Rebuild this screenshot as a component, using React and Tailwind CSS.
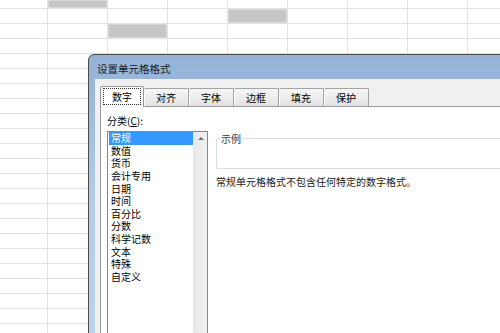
import React from "react";

const COLS = [48, 60, 60, 60, 60, 60, 60, 60, 60];
const ROW_COUNT = 23;

function Sheet() {
  const gray = new Set(["0-1", "1-4", "2-2"]);
  const rows = [];
  for (let r = 0; r < ROW_COUNT; r++) {
    const h = r === 0 ? "h-[9px]" : "h-[15px]";
    rows.push(
      <div key={r} className={`flex ${h}`}>
        {COLS.map((w, c) => {
          const isGray = gray.has(`${r}-${c}`);
          return (
            <div
              key={c}
              className={`shrink-0 h-full border-r border-b border-[#e1e1e1] ${c === 0 ? "w-[48px]" : "w-[60px]"} ${
                isGray ? "bg-[#c6c6c6] shadow-[inset_0_0_0_1px_#d9d9d9]" : ""
              }`}
            />
          );
        })}
      </div>
    );
  }
  return <div className="flex flex-col">{rows}</div>;
}

const tabs = ["数字", "对齐", "字体", "边框", "填充", "保护"];
const items = ["常规", "数值", "货币", "会计专用", "日期", "时间", "百分比", "分数", "科学记数", "文本", "特殊", "自定义"];

export default function App() {
  return (
    <div
      className="relative w-[500px] h-[333px] overflow-hidden bg-white text-[10px] leading-[12px] text-black"
      style={{ fontFamily: '"Noto Sans CJK SC", "Noto Sans", sans-serif' }}
    >
      <Sheet />
      <div className="absolute left-[88px] top-[54px] w-[440px] h-[300px] rounded-tl-[6px] border border-[#4a4a4a] bg-gradient-to-b from-[#93b2d6] via-[#b4cce8] to-[#bcd3ec] flex flex-col">
        <div className="h-[24px] shrink-0 flex items-end pb-[4px] pl-[8px] text-[10.5px] text-[#1a1a1a]">设置单元格格式</div>
        <div className="flex-1 ml-[6px] bg-[#f0f0f0] pl-[5px] pt-[7px] flex flex-col">
          <div className="flex items-end h-[20px] relative z-10">
            {tabs.map((t, i) =>
              i === 0 ? (
                <div
                  key={t}
                  className="w-[44px] h-[21px] -mb-[1px] bg-white border border-[#9a9a9a] border-b-0 rounded-t-[2px] flex items-start justify-center pt-[1px] px-[2px]"
                >
                  <div className="w-[40px] h-[17px] border border-dotted border-[#333] flex items-center justify-center">{t}</div>
                </div>
              ) : (
                <div
                  key={t}
                  className="w-[45px] h-[18px] bg-gradient-to-b from-[#f7f7f7] to-[#e2e2e2] border border-[#a3a3a3] border-b-0 border-l-0 rounded-t-[2px] shadow-[inset_1px_0_0_#fdfdfd] flex items-center justify-center"
                >
                  {t}
                </div>
              )
            )}
          </div>
          <div className="flex-1 bg-white border-t border-l border-[#9a9a9a] flex pl-[6px] pt-[8px] gap-[8px]">
            <div className="flex flex-col w-[101px] shrink-0">
              <div className="h-[12px] flex items-center text-[10px]">
                分类(<span className="underline">C</span>):
              </div>
              <div className="mt-[4px] flex-1 border border-[#828790] flex">
                <div className="flex-1 flex flex-col pl-[1px]">
                  {items.map((it, i) => (
                    <div
                      key={it}
                      className={`h-[12.6px] leading-[12px] flex items-center pl-[2px] ${i === 0 ? "bg-[#3399ff] text-white" : ""}`}
                    >
                      {it}
                    </div>
                  ))}
                </div>
                <div className="w-[14px] bg-gradient-to-r from-[#e8e8e8] to-[#f2f2f2] border-l border-[#e4e4e4] flex justify-center pt-[5px]">
                  <div className="w-0 h-0 border-l-[3px] border-r-[3px] border-b-[3px] border-l-transparent border-r-transparent border-b-[#707070]" />
                </div>
              </div>
            </div>
            <div className="flex-1 flex flex-col pt-[23px]">
              <div className="relative h-[31px] border border-[#d5dfe5] rounded-l-[3px] border-r-0">
                <span className="absolute -top-[6px] left-[3px] bg-white px-[1px] text-[#333]">示例</span>
              </div>
              <div className="mt-[7px] text-[10px] text-[#222]">常规单元格格式不包含任何特定的数字格式。</div>
            </div>
          </div>
        </div>
      </div>
    </div>
  );
}
